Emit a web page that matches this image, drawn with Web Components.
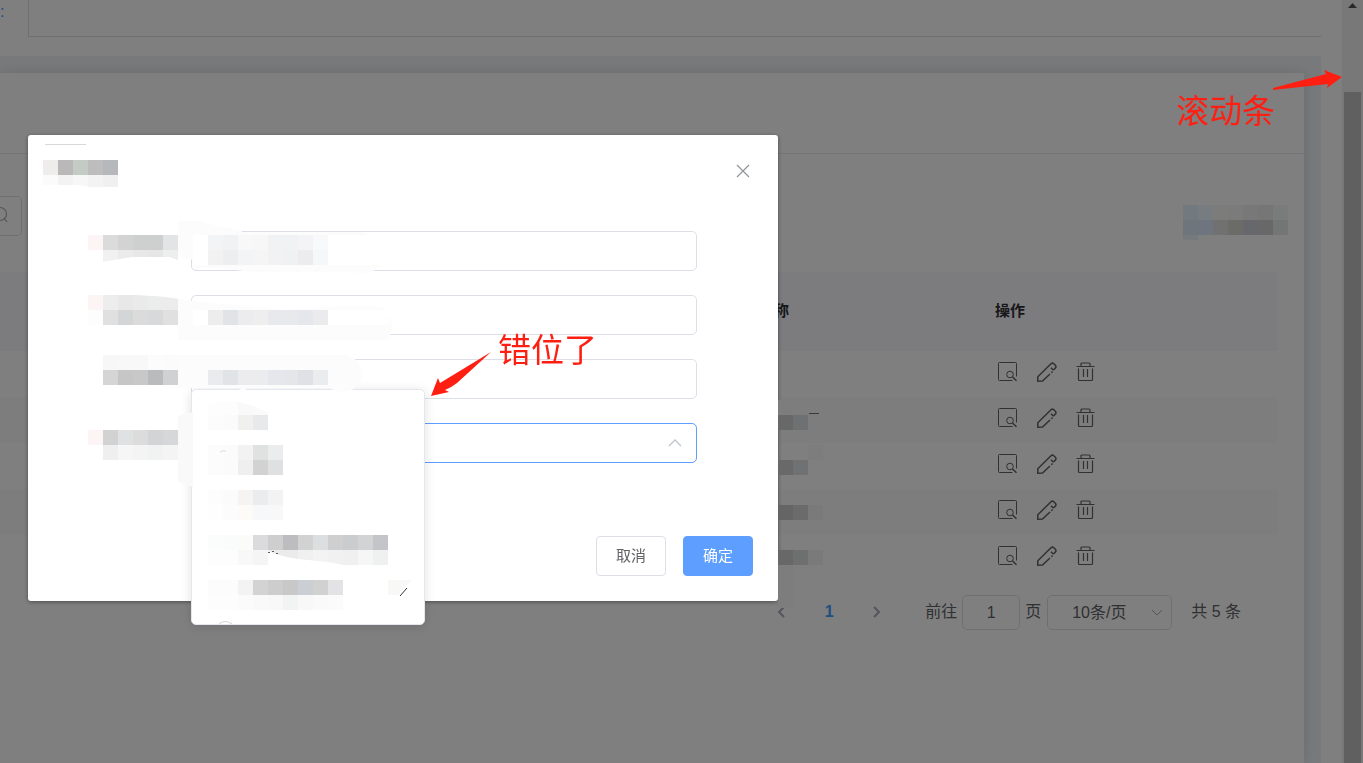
<!DOCTYPE html>
<html lang="zh-CN">
<head>
<meta charset="utf-8">
<title>列表</title>
<style>
  body {
    margin: 0;
    height: 100vh;
    overflow: hidden;
    background: #fff;
    color: #606266;
    font-family: "Liberation Sans", "Noto Sans CJK SC", sans-serif;
    font-size: 16px;
  }
</style>
</head>
<body>
<page-shell>
  <editor-strip></editor-strip>
  <list-card>
    <data-table></data-table>
    <page-nav></page-nav>
  </list-card>
</page-shell>
<modal-mask>
  <form-dialog>
    <mosaic-block slot="title" rows="eeedeb bab8b8 c4cac5 bcbdbc b6b8bb|fbfbfb f3f3f3 f7f7f7 f3f3f3 f0f0f0"></mosaic-block>
    <form-row name="field1"></form-row>
    <form-row name="field2"></form-row>
    <form-row name="field3"></form-row>
    <form-row name="field4" open>
      <option-list></option-list>
    </form-row>
    <ui-button slot="footer">取消</ui-button>
    <ui-button slot="footer" primary>确定</ui-button>
  </form-dialog>
</modal-mask>
<brush-layer></brush-layer>
<red-note style="left: 498px; top: 333px">错位了</red-note>
<red-note style="right: 88px; top: 94px">滚动条</red-note>

<script>
//////////////
// helper
//////////////
const make = (name, html, setup) => {
  customElements.define(name, class extends HTMLElement {
    constructor() {
      super();
      this.attachShadow({ mode: "open" });
    }
    connectedCallback() {
      this.shadowRoot.innerHTML = typeof html === "function" ? html(this) : html;
      if (setup) setup(this);
    }
  });
};

// rows of hex colours -> 15px squares
const squares = (x, y, rows) =>
  rows.split("|").map((row, r) =>
    row.split(" ").map((c, i) =>
      c === "-" ? "" : `<rect x="${x + i * 15}" y="${y + r * 15}" width="15" height="15" fill="#${c}"/>`
    ).join("")
  ).join("");

//////////////
// Page
//////////////
make("page-shell", `
  <style>
    :host { display: flex; height: 100vh; overflow: hidden; }
    main { flex: 1; min-width: 0; display: flex; flex-direction: column; padding-right: 21px; }
    .bar { width: 17px; padding: 0 2px; background: #f1f1f1; display: flex; flex-direction: column; }
    .bar svg { display: block; height: 92px; }
    .thumb { flex: 1; background: #c1c1c1; }
  </style>
  <main><slot></slot></main>
  <div class="bar">
    <svg width="17" height="92"><path d="M4 8 L8.500 3 L13 8 Z" fill="#505050"/></svg>
    <div class="thumb"></div>
  </div>
`);

make("editor-strip", `
  <style>
    :host { display: flex; height: 56px; }
    a { width: 28px; color: #409eff; text-decoration: none; line-height: 24px; }
    div { flex: 1; height: 36px; border: solid #dcdfe6; border-width: 0 0 1px 1px; }
  </style>
  <a href="#">:</a><div></div>
`);

make("list-card", `
  <style>
    :host { flex: 1; display: flex; background: #f1f3f7; padding: 17px 17px 0 0; overflow: hidden; }
    section { flex: 1; background: #fff; box-shadow: 0 0 12px rgba(0, 0, 20, .12); }
    header { height: 80px; border-bottom: 1px solid #e8eaf0; }
    .tools { display: flex; padding: 42px 0 36px; }
    button {
      box-sizing: border-box; width: 22px; height: 40px; padding: 0; overflow: hidden;
      background: none; border: 1px solid #dcdfe6; border-left: 0; border-radius: 0 5px 5px 0;
      display: flex; align-items: center;
    }
    svg { display: block; }
  </style>
  <section>
    <header></header>
    <div class="tools">
      <button aria-label="搜索">
        <svg width="8" height="20" fill="none" stroke="#a8abb2" stroke-width="1.200"><circle cx="0" cy="8" r="6.500"/><path d="M4 12 L7 16"/></svg>
      </button>
    </div>
    <slot></slot>
  </section>
`);

const icons = {
  view: `<path d="M14.500 18.500H1.500a1 1 0 0 1-1-1V1.500a1 1 0 0 1 1-1h16a1 1 0 0 1 1 1V14.500"/><circle cx="12" cy="12.500" r="3.300"/><path d="M14.500 15 L18.500 18.800" stroke-width="1.500"/>`,
  edit: `<path stroke-width="1.500" d="M13 12 L5.500 19 L.8 19.200 L.8 14.800 L14 1.800 a2 2 0 0 1 2.800 0 L18.300 3.300 a2 2 0 0 1 0 2.800 L17.300 7.300 a1.200 1.200 0 0 1-1.800 0 L14 5.800 M14.300 10.700 L15.600 9.500"/>`,
  remove: `<path stroke-width="1.200" d="M.5 4.500H18.500M5 4.500V2a1 1 0 0 1 1-1h7a1 1 0 0 1 1 1v2.500M2.500 6.500v11a1 1 0 0 0 1 1h12a1 1 0 0 0 1-1V6.500M7.500 7v8M11.500 7v8"/>`
};

make("row-action", (el) => `
  <style>
    :host { display: block; }
    button { display: block; padding: 0; border: 0; background: none; }
    svg { display: block; fill: none; stroke: #606266; stroke-width: 1; }
  </style>
  <button aria-label="${el.getAttribute("label")}"><svg width="20" height="20">${icons[el.getAttribute("icon")]}</svg></button>
`);

make("data-table", `
  <style>
    :host { display: block; padding-right: 26px; }
    table { width: 100%; table-layout: fixed; border-collapse: collapse; }
    .name { width: 221px; }
    .ops { width: 298px; }
    th { height: 79px; padding: 0 15px 4px; text-align: left; font-size: 15px; color: #303133; background: #f8f8fd; box-sizing: border-box; }
    td { height: 46px; padding: 0 18px 5px; box-sizing: border-box; }
    tr:nth-child(even) td { background: #fafafa; }
    div { display: flex; gap: 19px; }
  </style>
  <table>
    <colgroup><col><col class="name"><col class="ops"></colgroup>
    <thead><tr><th></th><th>称</th><th>操作</th></tr></thead>
    <tbody></tbody>
  </table>
`, (el) => {
  const row = `<tr><td></td><td></td><td><div>
    <row-action icon="view" label="查看"></row-action>
    <row-action icon="edit" label="编辑"></row-action>
    <row-action icon="remove" label="删除"></row-action>
  </div></td></tr>`;
  el.shadowRoot.querySelector("tbody").innerHTML = row.repeat(5);
});

make("page-nav", `
  <style>
    :host { display: flex; justify-content: flex-end; align-items: center; margin-top: 14px; padding-right: 63px; }
    button { width: 20px; height: 32px; padding: 0 0 2px; border: 0; background: none; font: inherit; font-weight: bold; color: #409eff; }
    .num { margin: 0 28px; }
    button svg, .size svg { display: block; fill: none; stroke: #a8abb2; stroke-width: 2; }
    button svg { margin: auto; }
    label { display: flex; align-items: center; gap: 5px; margin-left: 38px; }
    span { padding-bottom: 5px; }
    input, select {
      box-sizing: border-box; height: 35px; border: 1px solid #dcdfe6; border-radius: 5px;
      background: none; font: inherit; color: inherit;
    }
    input { width: 58px; padding: 0; text-align: center; }
    .size { display: grid; align-items: center; margin: 0 19px 0 6px; }
    .size > * { grid-area: 1 / 1; }
    select { width: 125px; padding: 0 24px; appearance: none; }
    .size svg { justify-self: end; margin-right: 9px; stroke-width: 1; pointer-events: none; }
  </style>
  <button aria-label="上一页"><svg width="10" height="14"><path d="M8 2 L3 7 L8 12"/></svg></button>
  <button class="num">1</button>
  <button aria-label="下一页"><svg width="10" height="14"><path d="M2 2 L7 7 L2 12"/></svg></button>
  <label><span>前往</span><input value="1"><span>页</span></label>
  <div class="size">
    <select aria-label="每页条数"><option>10条/页</option></select>
    <svg width="12" height="8"><path d="M1 1 L6 6 L11 1"/></svg>
  </div>
  <span>共 5 条</span>
`);

//////////////
// Dialog
//////////////
make("modal-mask", `
  <style>
    :host { position: fixed; inset: 0; background: rgba(0, 0, 0, .5); padding: 135px 28px 0; }
  </style>
  <slot></slot>
`);

make("mosaic-block", (el) => {
  const rows = el.getAttribute("rows");
  const cols = Math.max(...rows.split("|").map((r) => r.split(" ").length));
  return `
    <style>:host { display: block; } svg { display: block; }</style>
    <svg width="${cols * 15}" height="${rows.split("|").length * 15}">${squares(0, 0, rows)}</svg>
  `;
});

make("form-dialog", `
  <style>
    :host {
      display: block; box-sizing: border-box; width: 750px; max-width: 100%; padding: 25px 25px 25px 15px;
      background: #fff; border-radius: 3px; box-shadow: 0 1px 4px rgba(0, 0, 0, .4);
    }
    header { display: flex; justify-content: space-between; align-items: flex-start; }
    header button { padding: 4px 3px; border: 0; background: none; }
    header svg { display: block; fill: none; stroke: #909399; stroke-width: 1.200; }
    form { display: flex; flex-direction: column; gap: 24px; padding: 41px 56px 0 45px; }
    footer { display: flex; justify-content: flex-end; gap: 17px; margin-top: 73px; }
  </style>
  <header>
    <slot name="title"></slot>
    <button aria-label="关闭"><svg width="14" height="14"><path d="M1 1 L13 13 M13 1 L1 13"/></svg></button>
  </header>
  <form><slot></slot></form>
  <footer><slot name="footer"></slot></footer>
`);

make("form-row", (el) => `
  <style>
    :host { display: flex; position: relative; }
    label { width: 103px; }
    input {
      flex: 1; min-width: 0; box-sizing: border-box; height: 40px; padding: 0 15px;
      border: 1px solid #dcdfe6; border-radius: 5px; background: #fff; font: inherit; color: inherit;
    }
    :host([open]) input { border-color: #5e9eff; }
    svg { display: none; }
    :host([open]) svg { display: block; position: absolute; right: 15px; top: 16px; fill: none; stroke: #c0c4cc; stroke-width: 1.300; }
    /* the popup sits over the field above it */
    ::slotted(option-list) { position: absolute; left: 103px; top: -34px; }
  </style>
  <label for="field"></label>
  <input id="field" name="${el.getAttribute("name")}">
  <svg width="14" height="8"><path d="M1 7 L7 1 L13 7"/></svg>
  <slot></slot>
`);

make("option-list", `
  <style>
    :host {
      display: block; box-sizing: border-box; width: 234px; height: 236px; padding: 10px 16px 0; overflow: hidden;
      background: #fff; border: 1px solid #e4e7ed; border-radius: 5px; box-shadow: 0 2px 12px rgba(0, 0, 0, .12);
    }
    ul { list-style: none; margin: 0; padding: 0; display: flex; flex-direction: column; gap: 15px; }
  </style>
  <ul>
    <li><mosaic-block rows="fdfdfd fdfdfd f9f9f9 fafafa|fcfcfc fbfbfb f0f0ee e8e9ea"></mosaic-block></li>
    <li><mosaic-block rows="fcfcfc fbfbfb f2f2f2 e0e2e1 ebecee|fcfcfc fbfbfb efefef d2d2d2 dfe0e2"></mosaic-block></li>
    <li><mosaic-block rows="fdfdfd fbfbfb f5f4f2 eaecee f3f3f3|fefefe fcfcfc fcfbf8 f6f8fa f8f8f8"></mosaic-block></li>
    <li><mosaic-block rows="fbfdfc fafcfb fbfbf9 dbdbdd cecece bdbdbf d2d2d2 dddee0 cfcfcf cbcccd d2d3d5 c4c5c9|fdfdfd fdfdfd f8f8f8 f5f5f5 ebebeb ebebeb f0f0f0 f3f3f3 f0f1f0 f0f0f0 f6f6f6 eff1f0"></mosaic-block></li>
    <li><mosaic-block rows="fcfcfc fcfcfc f3f3f3 d3d3d3 cdcdcd c8c8c8 cbced3 d1d1d1 e3e3e5|fdfdfd fdfdfd fbfbfb f9f9f9 f8f8f8 f2f4f3 f8f8f8 fafafa fbfbfb"></mosaic-block></li>
  </ul>
`);

make("ui-button", `
  <style>
    :host { display: block; }
    button {
      display: block; box-sizing: border-box; width: 70px; height: 40px; padding: 0 0 4px; font: inherit; font-size: 15px;
      color: #606266; background: #fff; border: 1px solid #dcdfe6; border-radius: 4px;
    }
    :host([primary]) button { color: #fff; background: #5e9eff; border-color: #5e9eff; }
  </style>
  <button><slot></slot></button>
`);

//////////////
// Brush strokes and notes
//////////////
make("brush-layer", `
  <style>
    :host { position: fixed; inset: 0; pointer-events: none; }
    svg { display: block; width: 100%; height: 100%; }
  </style>
  <svg>
    <!-- smudges over the field borders -->
    <path fill="#fcfcfc" d="M178 221h22q14 5 42 9v2h120l8 3v30h11l-10 8-30-1h-90l-30-4h-28v-8l-15-4z"/>
    <path fill="#fff" d="M193 235h185v30h-185z"/>
    <path d="M242 231.500h130" stroke="#dcdfe6"/>
    <path fill="#fcfcfc" d="M178 299l15 2 40 4 50 5 60-4q35-2 44 4l6 15q-2 10-6 15H178z"/>
    <path fill="#fff" d="M193 310h196v15H193z"/>
    <path fill="#fcfcfc" d="M178 355h168q15 4 16 18 0 16-18 19-8 0-14-4H178z"/>
    <path fill="#f9f9f9" d="M178 416l15-4v75l-15-5z"/>
    <path fill="#fff" d="M237 391l6-3 6 3z"/>
    <g shape-rendering="crispEdges">
      ${squares(88, 235, "fdf5f5 dbdbdb d3d3d3 cecfcf cecfcf e2e4e5|- f1f1f1 ebebeb e8e8e8 e6e6e6 edeeee")}
      ${squares(208, 235, "f3f4f6 f0f2f4 f8f8f8 f7f7f7 f0f2f4 f0f2f4 f4f4f6 f8f9fb|f2f2f2 eceef0 f3f4f6 f5f5f5 f2f2f4 eff1f3 ececee f6f7f9")}
      ${squares(88, 295, "fdf5f5 ededed e8e8e8 eaeaea ebecec ececec|fdfdfd e0e0e0 d4d5d7 dbdbdb d8d9db e0e0e0")}
      ${squares(208, 310, "ededee e0e4e7 ececee eeeeee e8e9ed e8e9ed e6e7ec ebebed")}
      ${squares(103, 355, "f7f7f7 f8f8f8 f8f8f8 fcfcfc fbfbfb|d5d5d5 c6c6c6 c8c8c8 babbbd d0d1d3")}
      ${squares(208, 370, "eaebed e0e4e7 ececee ebecee e6e7ec e4e6ea e0e1e6 ebecee")}
      ${squares(88, 430, "fdf5f5 d2d2d2 e0e1e3 dcdcdc d3d4d6 d6d7d9|- efefef f6f6f6 f4f4f4 f1f3f2 f4f4f4")}
      ${squares(1168, 205, "7f7f7f 737a7f 767c80 7c7c7b 7b7b7b 787878 767676 7a7c7b|7f7f7f 6e757b 6f757e 717171 6b6b67 66686b 686868 747675")}
      <rect x="1183" y="235" width="15" height="5" fill="#757a7d"/>
      <path fill="#7d7d7d" d="M778 400h20l10 15h-30zM808 445h15v15h-15zM778 565h15v43h-15z"/>
      ${squares(778, 415, "686868 6f7072")}
      ${squares(778, 460, "696969 6f7172")}
      ${squares(778, 505, "656565 6b6b6b 7a7a7a")}
      ${squares(778, 550, "686868 6e706f 7a7a7a")}
      <rect x="809" y="413" width="10" height="1" fill="#3a3a3c"/>
    </g>
    <!-- ragged edges -->
    <g fill="#fff">
      <path d="M102 262l30-5h38l10 4v6h-78z"/>
      <path d="M43 185h35l12 2h28v4H43z"/>
      <path d="M133 294h46v5q-14-3-46-4z"/>
      <path d="M207 399h62v14q-24-11-35-12-18 0-27 5z"/>
      <path d="M268 551q20 8 40 9 25 2 40 6h-80z"/>
    </g>
    <path d="M388 580h24l-14 15h-10z" fill="#f8f8f7"/>
    <path d="M400 596 L407 588" stroke="#303133" fill="none"/>
    <path d="M268 552.500h2M272 551.500h2M276 553.500h2" stroke="#5a5a62" fill="none"/>
    <path d="M220 452q3-2 6-1" stroke="#ddd" fill="none"/>
    <path d="M219 624q6-5 13 0" stroke="#d0d3da" fill="none"/>
    <path d="M45 144.500h41" stroke="#d8d8d8"/>
    <!-- arrows -->
    <g fill="#ff1f12">
      <path d="M491 352 L440 383 L438 378 L431 396 L449 392 L445 390 Q452 387 457 383 Z"/>
      <path d="M1273 88 L1326 74 L1324 70 L1342 77 L1327 88 L1328 84 L1273 90 Z"/>
    </g>
  </svg>
`);

make("red-note", `
  <style>
    :host { position: fixed; color: #ff1f12; font-size: 33px; line-height: 36px; white-space: nowrap; }
  </style>
  <slot></slot>
`);
</script>
</body>
</html>
